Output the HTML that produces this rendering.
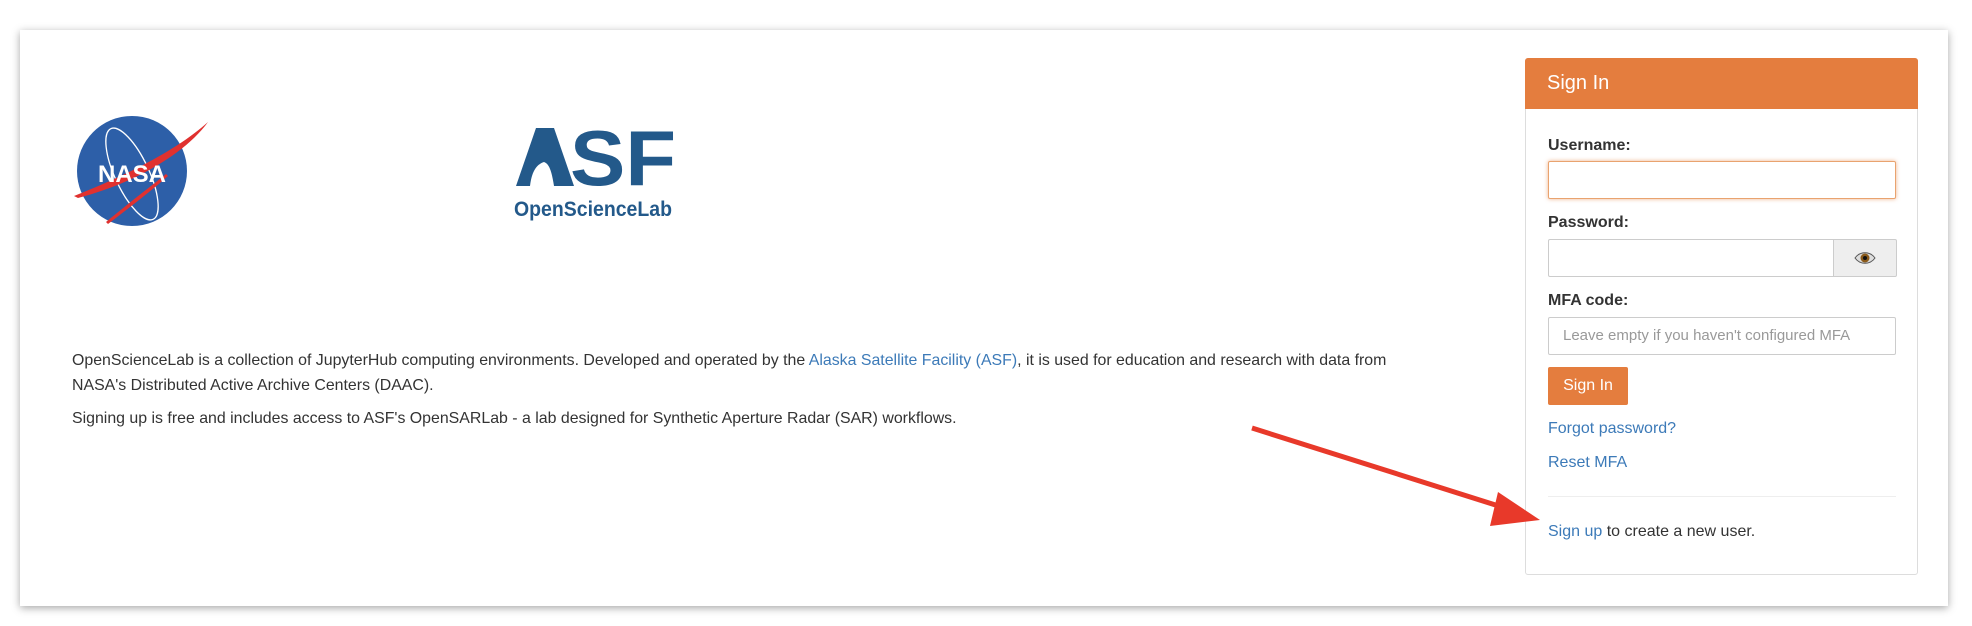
<!DOCTYPE html>
<html><head><meta charset="utf-8"><style>
body{margin:0;width:1972px;height:626px;background:#fff;position:relative;overflow:hidden;font-family:"Liberation Sans",Arial,sans-serif;}
.card{position:absolute;left:20px;top:30px;width:1928px;height:576px;background:#fff;box-shadow:0 2px 8px rgba(0,0,0,.35);}
.abs{position:absolute;}
.txt{font-size:15.9px;color:#333;white-space:nowrap;}
a{color:#3c7ab8;text-decoration:none;}
.panel{position:absolute;left:1525px;top:58px;width:391px;height:515px;border:1px solid #ddd;border-radius:3px;background:#fff;}
.hdr{position:absolute;left:0;top:0;width:393px;height:51px;margin:-1px;background:#e47d3e;border-radius:3px 3px 0 0;color:#fff;font-size:20px;line-height:51px;padding-left:0;}
.lbl{position:absolute;left:22px;font-size:16px;font-weight:bold;color:#333;}
.inp{position:absolute;left:22px;width:346px;height:36px;border:1px solid #ccc;border-radius:2px;background:#fff;}
</style></head><body>
<div class="card"></div>
<svg class="abs" style="left:70px;top:112px" width="150" height="120" viewBox="0 0 150 120">
<circle cx="62" cy="59" r="55" fill="#2d5fa8"/>
<ellipse cx="62" cy="62" rx="17" ry="50" transform="rotate(-25 62 62)" fill="none" stroke="#fff" stroke-width="1.3"/>
<path d="M4 84 C50 66 105 40 138 10 C118 38 70 70 8 86 Z" fill="#e0312f"/>
<path d="M36 110 C60 90 80 75 96 62 L98 64 C80 80 60 95 38 112 Z" fill="#e0312f"/>
<text x="62" y="70" text-anchor="middle" font-family="Liberation Sans" font-weight="bold" font-size="24" fill="#fff">NASA</text>
</svg>
<svg class="abs" style="left:512px;top:124px" width="170" height="100" viewBox="0 0 170 100">
<path d="M4 62 L24 4 L42 4 L62 62 Z" fill="#23598a"/>
<path d="M18 62 C20 45 26 40 32 38 C38 40 40 50 42 62 Z" fill="#fff"/>
<text x="58" y="61" font-family="Liberation Sans" font-weight="bold" font-size="78" fill="#23598a" textLength="106" lengthAdjust="spacingAndGlyphs">SF</text>
<text x="2" y="92" font-family="Liberation Sans" font-weight="bold" font-size="21" fill="#23598a" textLength="158" lengthAdjust="spacingAndGlyphs">OpenScienceLab</text>
</svg>
<div class="abs txt" style="left:72px;top:352px">OpenScienceLab is a collection of JupyterHub computing environments. Developed and operated by the <a>Alaska Satellite Facility (ASF)</a>, it is used for education and research with data from</div>
<div class="abs txt" style="left:72px;top:377px">NASA's Distributed Active Archive Centers (DAAC).</div>
<div class="abs txt" style="left:72px;top:410px">Signing up is free and includes access to ASF's OpenSARLab - a lab designed for Synthetic Aperture Radar (SAR) workflows.</div>
<div class="panel">
<div class="hdr"><span style="margin-left:22px">Sign In</span></div>
<div class="lbl" style="top:78px">Username:</div>
<div class="inp" style="top:102px;border-color:#e9a36f;box-shadow:0 0 4px rgba(228,125,62,.6)"></div>
<div class="lbl" style="top:155px">Password:</div>
<div class="inp" style="top:180px"></div>
<div class="abs" style="left:307px;top:180px;width:62px;height:36px;background:#eee;border:1px solid #ccc;border-radius:0 2px 2px 0;text-align:center;line-height:36px;font-size:16px">
<svg width="22" height="14" viewBox="0 0 22 14" style="vertical-align:middle"><path d="M1 7 C6 0 16 0 21 7 C16 14 6 14 1 7Z" fill="#ddd" stroke="#555"/><circle cx="11" cy="7" r="4.5" fill="#8a5a1a"/><circle cx="11" cy="7" r="2" fill="#111"/></svg></div>
<div class="lbl" style="top:233px">MFA code:</div>
<div class="inp" style="top:258px"><span style="position:absolute;left:14px;top:9px;font-size:15px;color:#999;white-space:nowrap">Leave empty if you haven't configured MFA</span></div>
<div class="abs" style="left:22px;top:308px;width:80px;height:38px;background:#e47d3e;border-radius:2px;color:#fff;font-size:16px;line-height:38px;text-align:center">Sign In</div>
<a class="abs" style="left:22px;top:361px;font-size:16px">Forgot password?</a>
<a class="abs" style="left:22px;top:395px;font-size:16px">Reset MFA</a>
<div class="abs" style="left:22px;top:437px;width:348px;border-top:1px solid #eee"></div>
<div class="abs" style="left:22px;top:464px;font-size:16px;color:#333;white-space:nowrap"><a>Sign up</a> to create a new user.</div>
</div>
<svg class="abs" style="left:0;top:0" width="1972" height="626">
<line x1="1252" y1="428" x2="1505" y2="508" stroke="#e8392a" stroke-width="5"/>
<path d="M1540 520 L1498 492 L1490 526 Z" fill="#e8392a"/>
</svg>
</body></html>
